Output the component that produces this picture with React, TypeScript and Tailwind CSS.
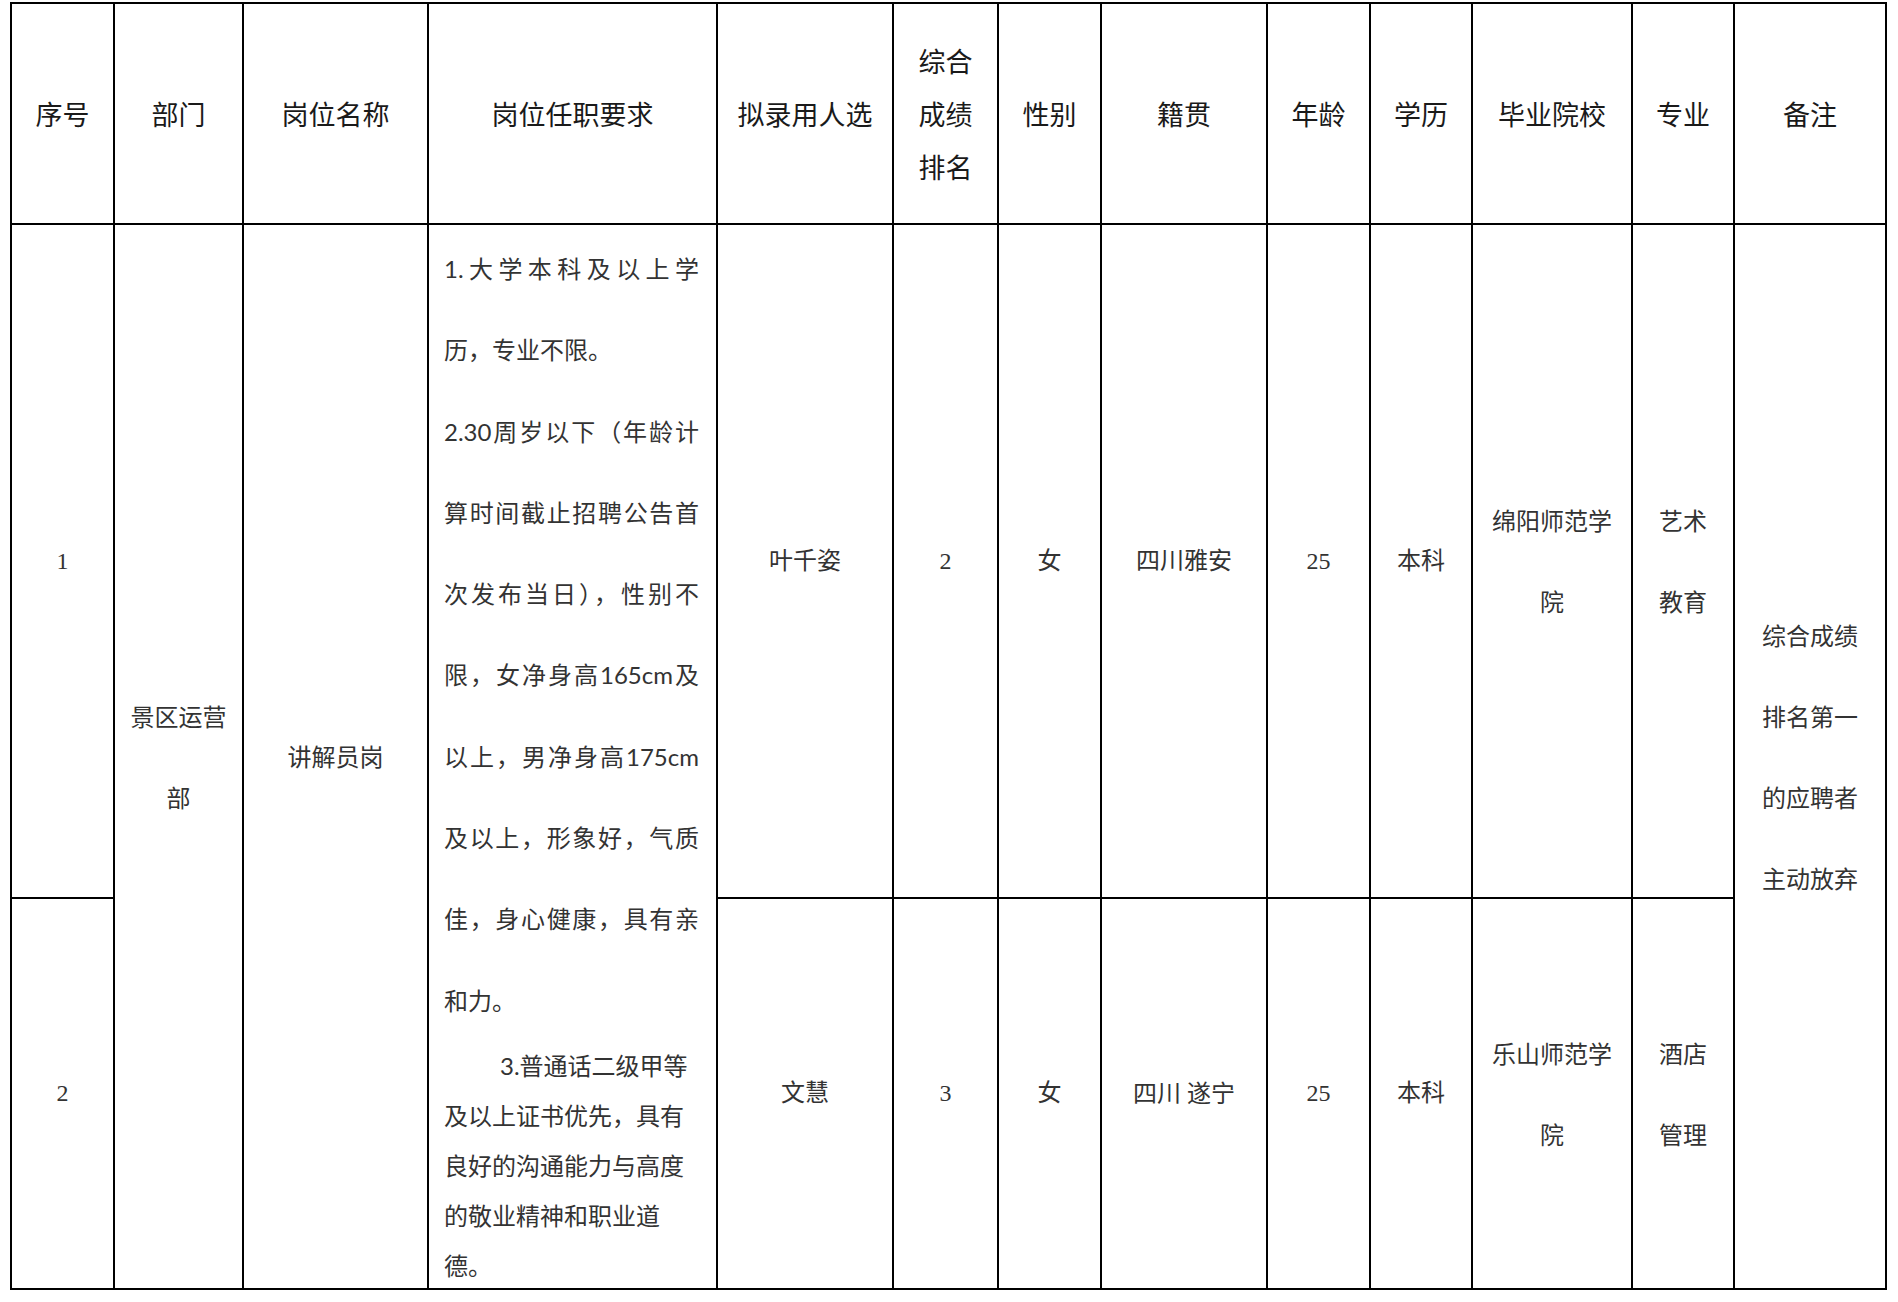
import React from 'react';

const serif = "font-['Liberation_Serif','Noto_Sans_CJK_SC',serif]";
const sans = "font-['Lato','Noto_Sans_CJK_SC',sans-serif]";

const headers = ['序号', '部门', '岗位名称', '岗位任职要求', '拟录用人选', null, '性别', '籍贯', '年龄', '学历', '毕业院校', '专业', '备注'];

function Cell({ children, className = '' }: { children?: React.ReactNode; className?: string }) {
  return (
    <div className={`flex items-center justify-center bg-white text-center ${className}`}>
      {children}
    </div>
  );
}

// one justified line of the requirement text
function Just({ children }: { children: React.ReactNode }) {
  return <div className="text-justify [text-align-last:justify]">{children}</div>;
}

function Lines({ items, className = '' }: { items: string[]; className?: string }) {
  return (
    <div className={`text-[24px] leading-[81px] text-[#333] ${sans} ${className}`}>
      {items.map((t) => (
        <div key={t}>{t}</div>
      ))}
    </div>
  );
}

function Plain({ text, font = serif }: { text: string; font?: string }) {
  return <span className={`text-[24px] leading-[81px] text-[#333] ${font}`}>{text}</span>;
}

export default function App() {
  return (
    <div className="min-h-screen bg-white pt-[2px] pl-[10px]">
      <div className="grid w-fit grid-cols-[101px_127px_183px_287px_174px_103px_101px_164px_101px_100px_158px_100px_150px] grid-rows-[219px_672px_389px] gap-[2px] bg-black p-[2px]">
        {/* Header */}
        {headers.map((h, i) =>
          h === null ? (
            <Cell key={i} className="pt-[5px]">
              <div className={`text-[27px] leading-[53px] text-[#1a1a1a] ${serif}`}>
                <div>综合</div>
                <div>成绩</div>
                <div>排名</div>
              </div>
            </Cell>
          ) : (
            <Cell key={i} className="pt-[5px]">
              <span className={`text-[27px] text-[#1a1a1a] ${serif}`}>{h}</span>
            </Cell>
          )
        )}

        {/* Row 1 */}
        <Cell>
          <Plain text="1" />
        </Cell>
        <Cell className="row-span-2">
          <Lines items={['景区运营', '部']} />
        </Cell>
        <Cell className="row-span-2">
          <Plain text="讲解员岗" font={sans} />
        </Cell>
        <div className={`row-span-2 overflow-hidden bg-white pt-[3px] pl-[15px] pr-[17px] text-[24px] text-[#333] ${sans}`}>
          <div className="leading-[81.3px]">
            <Just>1.大学本科及以上学</Just>
            <div>历，专业不限。</div>
            <Just>2.30周岁以下（年龄计</Just>
            <Just>算时间截止招聘公告首</Just>
            <Just>次发布当日），性别不</Just>
            <Just>限，女净身高165cm及</Just>
            <Just>以上，男净身高175cm</Just>
            <Just>及以上，形象好，气质</Just>
            <Just>佳，身心健康，具有亲</Just>
            <div>和力。</div>
          </div>
          <div className="leading-[50px]">
            <div className="indent-[56px]">3.普通话二级甲等</div>
            <div>及以上证书优先，具有</div>
            <div>良好的沟通能力与高度</div>
            <div>的敬业精神和职业道</div>
            <div>德。</div>
          </div>
        </div>
        <Cell>
          <Plain text="叶千姿" />
        </Cell>
        <Cell>
          <Plain text="2" />
        </Cell>
        <Cell>
          <Plain text="女" />
        </Cell>
        <Cell>
          <Plain text="四川雅安" />
        </Cell>
        <Cell>
          <Plain text="25" />
        </Cell>
        <Cell>
          <Plain text="本科" />
        </Cell>
        <Cell>
          <Lines items={['绵阳师范学', '院']} />
        </Cell>
        <Cell>
          <Lines items={['艺术', '教育']} />
        </Cell>
        <Cell className="row-span-2">
          <Lines items={['综合成绩', '排名第一', '的应聘者', '主动放弃']} />
        </Cell>

        {/* Row 2 */}
        <Cell>
          <Plain text="2" />
        </Cell>
        <Cell>
          <Plain text="文慧" />
        </Cell>
        <Cell>
          <Plain text="3" />
        </Cell>
        <Cell>
          <Plain text="女" />
        </Cell>
        <Cell>
          <span className={`whitespace-pre text-[24px] text-[#333] ${serif}`}>四川 遂宁</span>
        </Cell>
        <Cell>
          <Plain text="25" />
        </Cell>
        <Cell>
          <Plain text="本科" />
        </Cell>
        <Cell>
          <Lines items={['乐山师范学', '院']} />
        </Cell>
        <Cell>
          <Lines items={['酒店', '管理']} />
        </Cell>
      </div>
    </div>
  );
}
